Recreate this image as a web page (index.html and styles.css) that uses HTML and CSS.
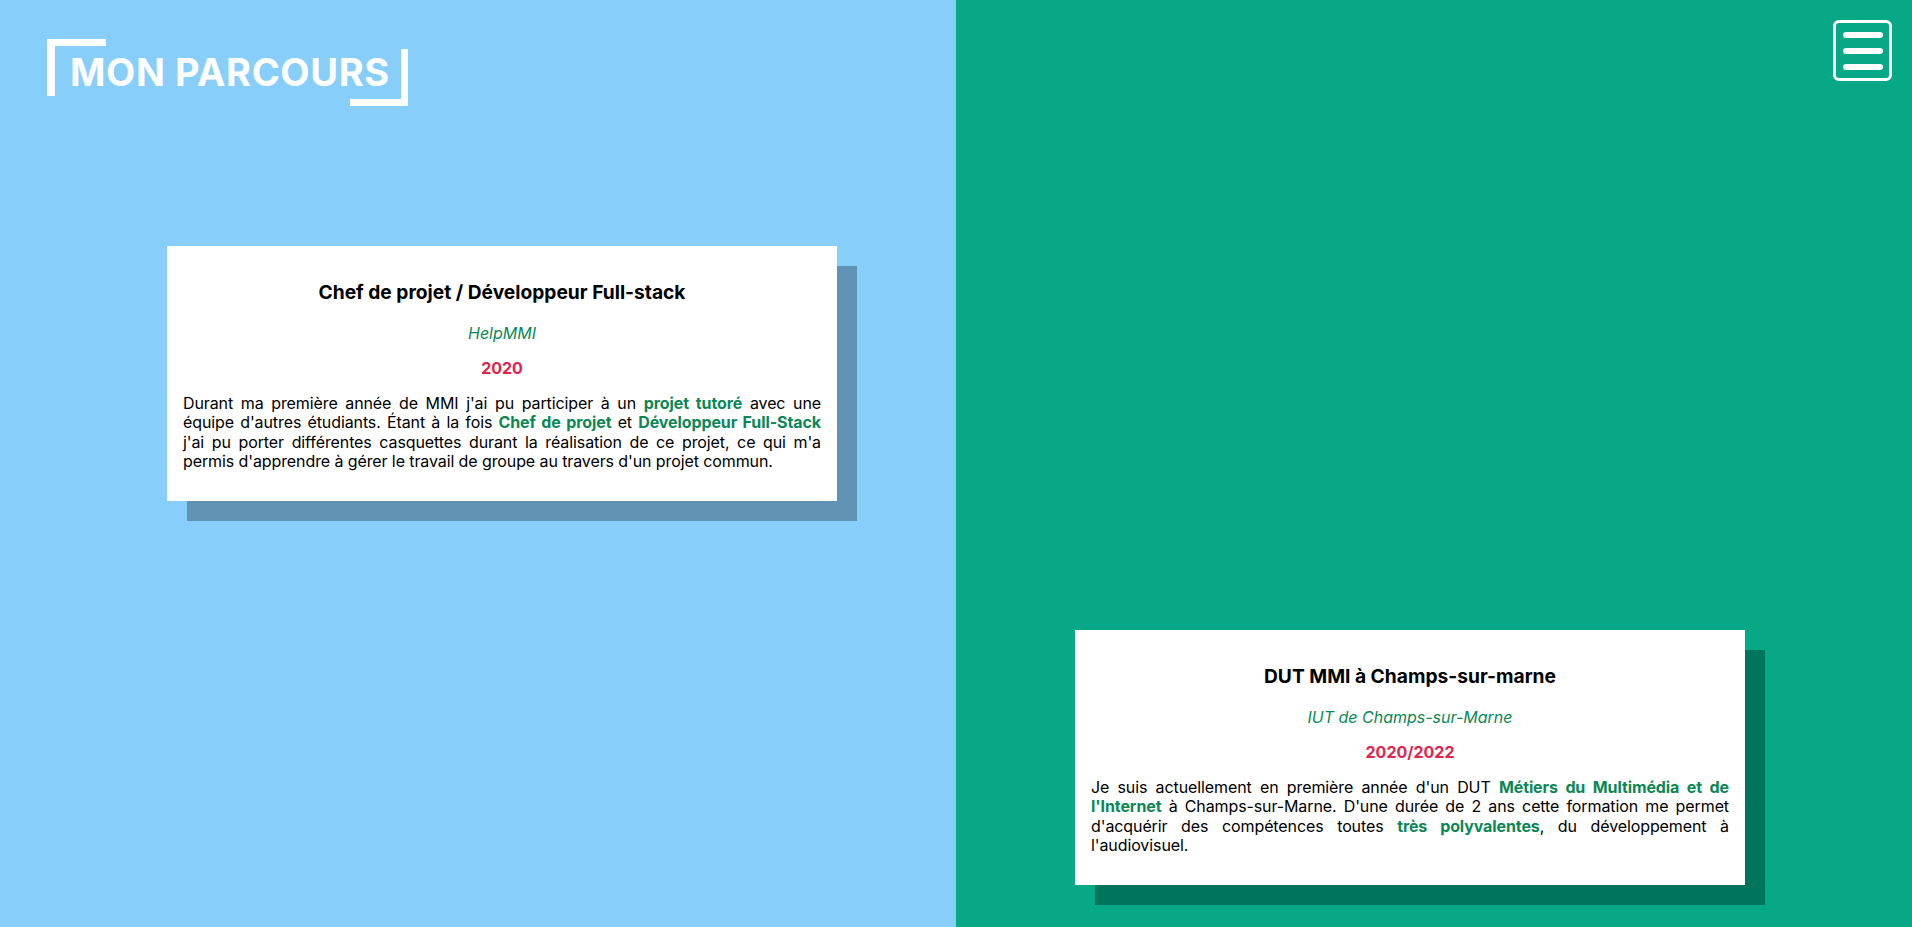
FILE: index.html
```html
<!DOCTYPE html>
<html lang="fr">
<head>
<meta charset="utf-8">
<title>Mon parcours</title>
<link rel="stylesheet" href="styles.css">
</head>
<body>
<main class="page">
  <section class="panel panel-left">
    <h1 class="page-title">MON PARCOURS</h1>
    <article class="card card-left">
      <h3 class="card-title">Chef de projet / Développeur Full-stack</h3>
      <p class="card-org">HelpMMI</p>
      <p class="card-date">2020</p>
      <p class="card-text">Durant ma première année de MMI j'ai pu participer à un <strong>projet tutoré</strong> avec une équipe d'autres étudiants. Étant à la fois <strong>Chef de projet</strong> et <strong>Développeur Full-Stack</strong> j'ai pu porter différentes casquettes durant la réalisation de ce projet, ce qui m'a permis d'apprendre à gérer le travail de groupe au travers d'un projet commun.</p>
    </article>
  </section>
  <section class="panel panel-right">
    <article class="card card-right">
      <h3 class="card-title">DUT MMI à Champs-sur-marne</h3>
      <p class="card-org">IUT de Champs-sur-Marne</p>
      <p class="card-date">2020/2022</p>
      <p class="card-text">Je suis actuellement en première année d'un DUT <strong>Métiers du Multimédia et de l'Internet</strong> à Champs-sur-Marne. D'une durée de 2 ans cette formation me permet d'acquérir des compétences toutes <strong>très polyvalentes</strong>, du développement à l'audiovisuel.</p>
    </article>
  </section>
  <button class="menu-btn" aria-label="Menu">
    <span class="menu-line"></span>
    <span class="menu-line"></span>
    <span class="menu-line"></span>
  </button>
</main>
</body>
</html>
```

FILE: styles.css
```css
* { box-sizing: border-box; }

html, body {
  margin: 0;
  padding: 0;
  height: 100%;
  overflow: hidden;
}

body {
  font-family: "Inter", "Noto Sans", "Liberation Sans", sans-serif;
  color: #000;
}

.page {
  display: grid;
  grid-template-columns: 1fr 1fr;
  height: 927px;
  position: relative;
}

.panel {
  display: flex;
  flex-direction: column;
  align-items: flex-start;
}

.panel-left {
  background: #87cefa;
  padding: 39px 0 0 47px;
}

.panel-right {
  background: #06a885;
  padding: 630px 0 0 119px;
}

.page-title {
  position: relative;
  margin: 0;
  width: 361px;
  height: 67px;
  line-height: 67px;
  padding-left: 23px;
  font-size: 38px;
  font-weight: 700;
  color: #fff;
  letter-spacing: 0.6px;
  white-space: nowrap;
}

.page-title::before,
.page-title::after {
  content: "";
  position: absolute;
  width: 51px;
  height: 50px;
  border: 0 solid #fff;
}

.page-title::before {
  top: 0;
  left: 0;
  border-top-width: 7px;
  border-left-width: 8px;
}

.page-title::after {
  right: 0;
  bottom: 0;
  border-bottom-width: 7px;
  border-right-width: 7px;
}

.card {
  width: 670px;
  background: #fff;
  padding: 16px;
  text-align: center;
}

.card-left {
  margin-top: 140px;
  margin-left: 120px;
  box-shadow: 20px 20px 0 #6093b3;
}

.card-right {
  box-shadow: 20px 20px 0 #01755b;
}

.card-title {
  margin: 18.5px 0 21px;
  font-size: 19.2px;
  line-height: 22px;
  font-weight: 700;
}

.card-org {
  margin: 16px 0;
  font-size: 16px;
  line-height: 19px;
  font-style: italic;
  color: #0b8756;
}

.card-date {
  margin: 16px 0;
  font-size: 16px;
  line-height: 19px;
  font-weight: 700;
  color: #e0244b;
}

.card-text {
  margin: 16px 0 13.5px;
  font-size: 16px;
  line-height: 19.5px;
  letter-spacing: -0.1px;
  text-align: justify;
}

.card-text strong {
  color: #0b8756;
  font-weight: 700;
}

.menu-btn {
  position: absolute;
  top: 20px;
  right: 20px;
  width: 59px;
  height: 61px;
  padding: 0;
  border: 3px solid #fff;
  border-radius: 6px;
  background: transparent;
  display: flex;
  flex-direction: column;
  align-items: center;
  justify-content: center;
  gap: 10px;
}

.menu-line {
  display: block;
  width: 40px;
  height: 6px;
  border-radius: 3px;
  background: #fff;
}
```
